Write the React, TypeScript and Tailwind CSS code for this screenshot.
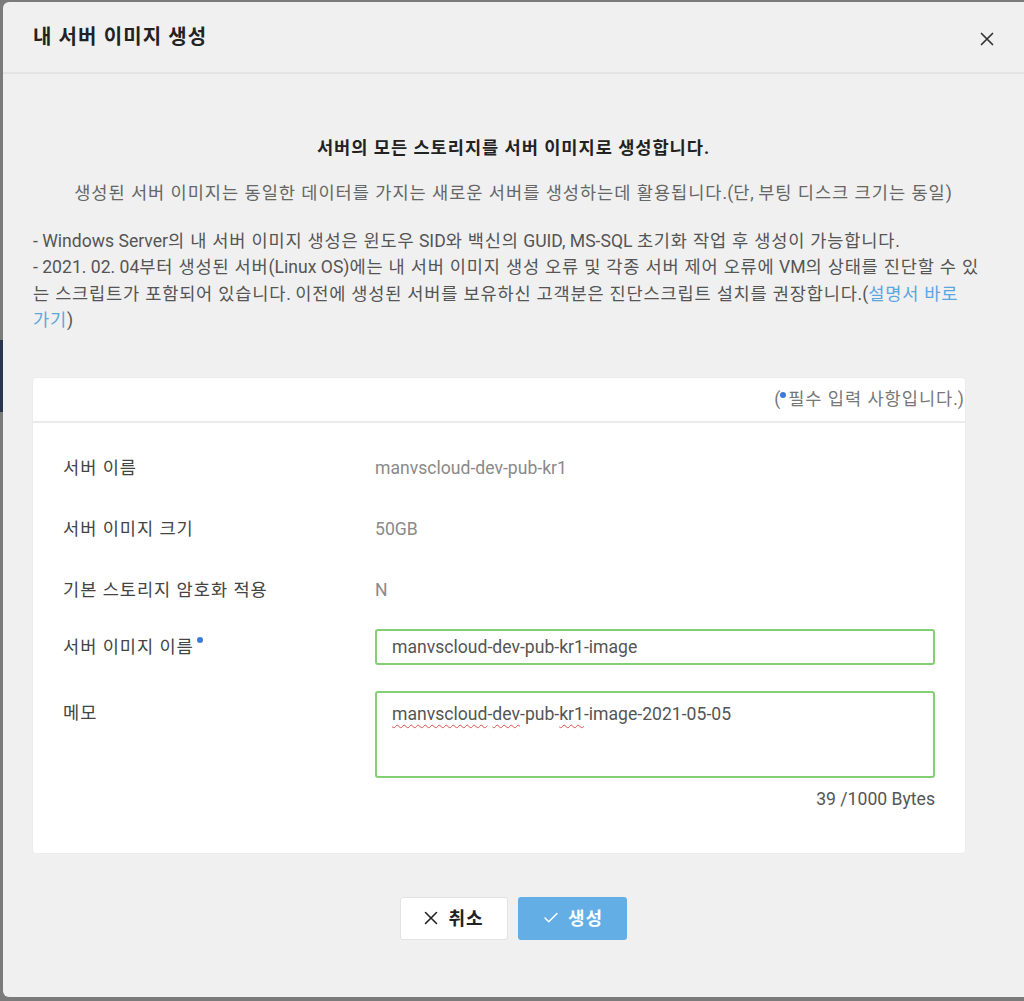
import { Check } from "lucide-react";

const font = { fontFamily: "Roboto, 'Noto Sans CJK KR', sans-serif" };

// the installed Hangul face runs narrower than the one in the design, so space Hangul runs out a bit
const HANGUL = /([\u3131-\uD7A3]+(?:\s+[\u3131-\uD7A3]+)*)/;

function Ko({ text, tight }: { text: string; tight?: boolean }) {
  const cls = tight ? "tracking-[0.045em]" : "tracking-[0.055em]";
  return (
    <>
      {text.split(HANGUL).map((part, i) =>
        i % 2 === 1 ? (
          <span key={i} className={cls}>
            {part}
          </span>
        ) : (
          part
        )
      )}
    </>
  );
}

function Cross({ size, stroke }: { size: number; stroke: number }) {
  return (
    <svg width={size} height={size} viewBox="0 0 14 14" fill="none" stroke="currentColor" strokeWidth={stroke} strokeLinecap="round">
      <path d="M1.5 1.5 12.5 12.5M12.5 1.5 1.5 12.5" />
    </svg>
  );
}

type InfoRow = { label: string; value: string };

const infoRows: InfoRow[] = [
  { label: "서버 이름", value: "manvscloud-dev-pub-kr1" },
  { label: "서버 이미지 크기", value: "50GB" },
  { label: "기본 스토리지 암호화 적용", value: "N" },
];

const squiggle = "underline decoration-wavy decoration-[#e05050] decoration-1 underline-offset-[4px]";

export default function App() {
  return (
    <div className="w-[1024px] h-[1001px] overflow-hidden bg-[#7b7b7b] flex pt-[2px]" style={font}>
      {/* page behind the modal */}
      <div className="w-[3px] shrink-0 flex flex-col">
        <div className="h-[338px]" />
        <div className="h-[72px] bg-[#2a3350]" />
      </div>

      {/* modal */}
      <div className="w-[1030px] h-[995px] shrink-0 bg-[#f0f0f0] rounded-md flex flex-col">
        {/* header */}
        <div className="h-[72px] shrink-0 flex items-center justify-between pl-[30px] pr-[39px] border-b-2 border-[#e4e4e4]">
          <h1 className="text-[20px] font-bold text-[#222]">
            <Ko text="내 서버 이미지 생성" />
          </h1>
          <span className="text-[#333] mt-[4px]">
            <Cross size={14} stroke={1.7} />
          </span>
        </div>

        {/* body */}
        <div className="flex flex-col pl-[30px] text-[17.6px]">
          <p className="w-[960px] text-center leading-[24px] font-bold text-[#222] mt-[62px]">
            <Ko text="서버의 모든 스토리지를 서버 이미지로 생성합니다." />
          </p>
          <p className="w-[960px] text-center leading-[24px] text-[#666] mt-[21px]">
            <Ko text="생성된 서버 이미지는 동일한 데이터를 가지는 새로운 서버를 생성하는데 활용됩니다.(단, 부팅 디스크 크기는 동일)" />
          </p>
          <div className="w-[950px] leading-[26.4px] text-[#555] mt-[23px] break-all">
            <p>
              <Ko tight text="- Windows Server의 내 서버 이미지 생성은 윈도우 SID와 백신의 GUID, MS-SQL 초기화 작업 후 생성이 가능합니다." />
            </p>
            <p>
              <Ko tight text="- 2021. 02. 04부터 생성된 서버(Linux OS)에는 내 서버 이미지 생성 오류 및 각종 서버 제어 오류에 VM의 상태를 진단할 수 있는 스크립트가 포함되어 있습니다. 이전에 생성된 서버를 보유하신 고객분은 진단스크립트 설치를 권장합니다.(" />
              <span className="text-[#5aa7e0] break-keep">
                <Ko tight text="설명서 바로 가기" />
              </span>
              )
            </p>
          </div>

          {/* form card */}
          <div className="w-[934px] -ml-[1px] mt-[43px] bg-white rounded-[4px] border border-[#ececec] flex flex-col">
            <div className="h-[45px] flex items-center justify-end pr-[1px] border-b-2 border-[#ebebeb] text-[#777]">
              (<span className="inline-block w-[6px] h-[6px] rounded-full bg-[#3d7bd9] mb-[8px] mr-[2px]" />
              <Ko text="필수 입력 사항입니다." />)
            </div>
            <div className="flex flex-col px-[30px] pt-[15px]">
              {infoRows.map((row) => (
                <div key={row.label} className="h-[61px] flex items-center">
                  <span className="w-[312px] text-[#444]">
                    <Ko text={row.label} />
                  </span>
                  <span className="text-[#8a8a8a]">{row.value}</span>
                </div>
              ))}
              <div className="h-[61px] flex items-center -mt-[4px]">
                <span className="w-[312px] text-[#444]">
                  <Ko text="서버 이미지 이름" />
                  <span className="inline-block w-[6px] h-[6px] rounded-full bg-[#3d7bd9] ml-[3px] mb-[10px]" />
                </span>
                <div className="flex-1 h-[36px] border-2 border-[#84cf74] rounded-[3px] flex items-center px-[15px] text-[#555]">
                  manvscloud-dev-pub-kr1-image
                </div>
              </div>
              <div className="flex mt-[13px]">
                <span className="w-[312px] text-[#444] pt-[9px]">
                  <Ko text="메모" />
                </span>
                <div className="flex-1 flex flex-col">
                  <div className="h-[87px] border-2 border-[#84cf74] rounded-[3px] px-[15px] pt-[8px] text-[#555]">
                    <span className={squiggle}>manvscloud</span>-<span className={squiggle}>dev</span>-pub-
                    <span className={squiggle}>kr1</span>-image-2021-05-05
                  </div>
                  <div className="text-right text-[#555] leading-[24px] mt-[9px] mb-[42px]">39 /1000 Bytes</div>
                </div>
              </div>
            </div>
          </div>

          {/* buttons */}
          <div className="w-[934px] flex justify-center gap-[10px] mt-[43px] pl-[27px]">
            <button className="w-[108px] h-[43px] bg-white border border-[#e2e2e2] rounded-[3px] flex items-center justify-center gap-[10px] text-[18px] font-bold text-[#222]">
              <Cross size={14} stroke={1.6} />
              <Ko text="취소" />
            </button>
            <button className="w-[109px] h-[43px] bg-[#64aee6] rounded-[3px] flex items-center justify-center gap-[8px] text-[18px] font-bold text-white">
              <Check className="w-[18px] h-[18px]" strokeWidth={2} />
              <Ko text="생성" />
            </button>
          </div>
        </div>
      </div>
    </div>
  );
}
